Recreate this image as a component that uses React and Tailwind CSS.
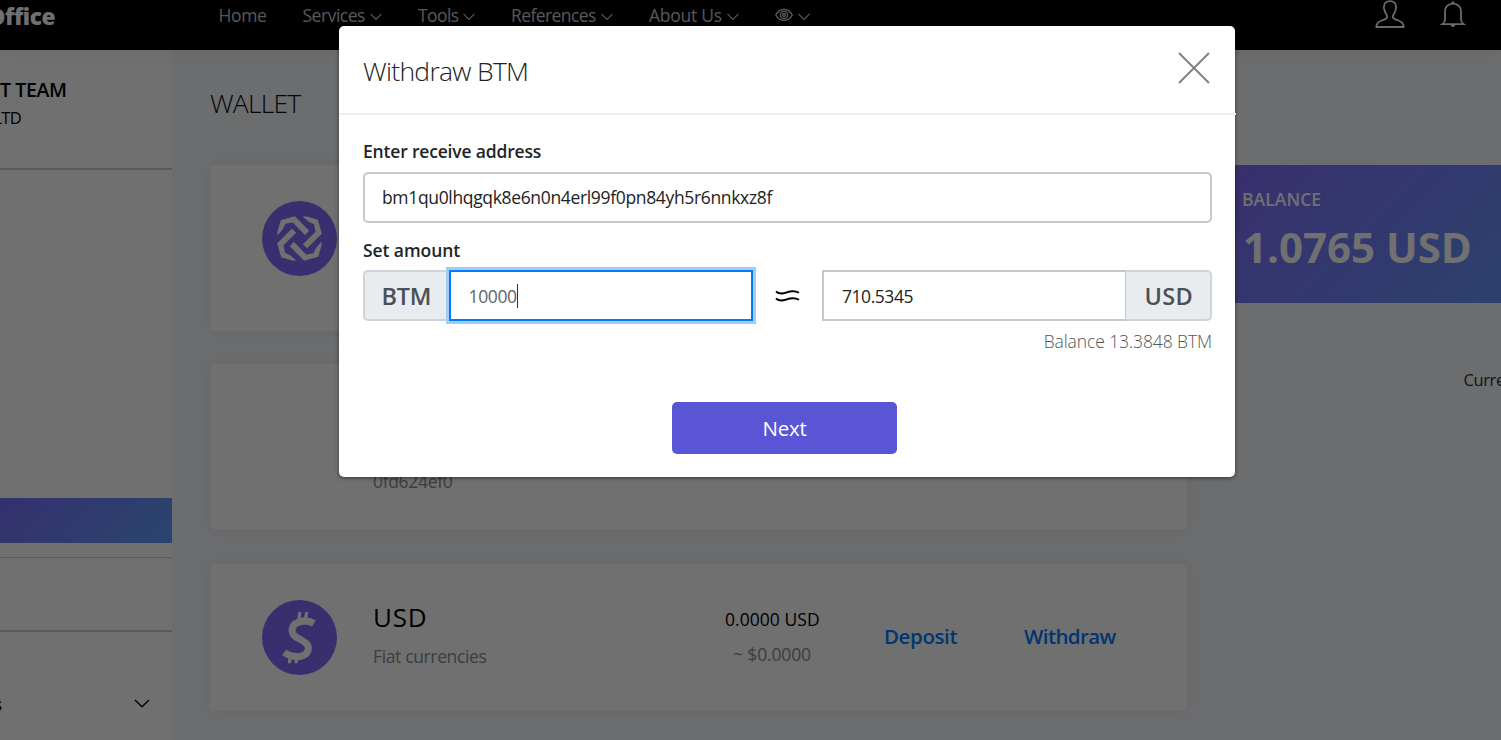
function Chevron({ className }) {
  return (
    <svg className={className} width="12" height="8" viewBox="0 0 12 8" fill="none" stroke="currentColor" strokeWidth="1.2">
      <path d="M.5 .8 6 6.400 11.500 .8" />
    </svg>
  );
}

function Eye() {
  return (
    <svg width="18" height="14" viewBox="0 0 19 14" fill="none" stroke="currentColor" strokeWidth="1.5">
      <path d="M.8 7C3 3.200 6 1.200 9.500 1.200S16 3.200 18.200 7C16 10.800 13 12.800 9.500 12.800S3 10.800 .8 7Z" />
      <circle cx="9.500" cy="7" r="3.800" />
      <circle cx="9.500" cy="7" r="1.500" />
    </svg>
  );
}

function Person() {
  return (
    <svg width="30" height="29" viewBox="0 0 30 29" fill="none" stroke="currentColor" strokeWidth="1.800">
      <path d="M12.200 16.800C12.200 14.600 9.600 12.800 9.300 9.200 8.800 8.600 8.700 7 9.200 6.400 9 3.200 10.900 1.200 15 1.200S21 3.200 20.800 6.400C21.300 7 21.200 8.600 20.700 9.200 20.400 12.800 17.800 14.600 17.800 16.800 17.800 19.400 20.500 19.400 23.500 20.500 26.800 21.700 28.600 23.800 28.600 27H1.400C1.400 23.800 3.200 21.700 6.500 20.500 9.500 19.400 12.200 19.400 12.200 16.800Z" />
    </svg>
  );
}

function Bell() {
  return (
    <svg className="mt-px" width="26" height="27" viewBox="0 0 26 27" fill="none" stroke="currentColor" strokeWidth="1.800">
      <path d="M13 2.600C8 2.600 5 6.200 5 10.500V18.500C5 20.300 4.300 21.800 2.300 23.200H23.700C21.700 21.800 21 20.300 21 18.500V10.500C21 6.200 18 2.600 13 2.600Z" />
      <path d="M13 .4V2.600" strokeWidth="2.500" />
      <path d="M10.600 23.800C10.800 25.400 11.800 26 13 26S15.200 25.400 15.400 23.800Z" fill="currentColor" stroke="none" />
    </svg>
  );
}

function BtmLogo() {
  const arm = "M-66-9V-22L-56-55-14-67 29-23 17-10-20-48-42-44-50-28Z";
  return (
    <svg width="75" height="75" viewBox="-112.500 -112.500 225 225">
      <circle r="112.500" fill="#846bfa" />
      <g fill="#fff">
        <path d={arm} />
        <path d={arm} transform="rotate(90)" />
        <path d={arm} transform="rotate(180)" />
        <path d={arm} transform="rotate(270)" />
      </g>
    </svg>
  );
}

function DollarLogo() {
  return (
    <svg width="75" height="75" viewBox="-112.500 -112.500 225 225" fill="none" stroke="#fff">
      <circle r="112.500" fill="#846bfa" stroke="none" />
      <path d="M43-42C30-50 12-51 0-47-16-42-24-31-22-18-20-4-6 1 8 9 22 17 30 26 26 38 21 53 6 59-12 57-26 56-36 52-46 45" strokeWidth="21" strokeLinejoin="round" />
      <path d="M1-72-3-52M21-72 17-52M-27 55-30 73M-7 55-10 73" strokeWidth="10" strokeLinecap="round" />
    </svg>
  );
}

function NavItem({ children, className, menu = true }) {
  return (
    <div className={`flex h-6 items-center gap-[5px] ${className}`}>
      {children}
      {menu && <Chevron className="mt-[3px]" />}
    </div>
  );
}

function Header() {
  return (
    <header className="relative z-10 flex h-[50px] w-full items-start bg-black text-white shadow-[0_0_16px_rgba(0,0,0,0.08)]">
      <div className="flex w-[218.500px] shrink-0">
        <div className="mt-[3px] flex w-[55px] shrink-0 justify-end text-[22.500px] leading-7 font-extrabold tracking-[-0.4px]">Office</div>
      </div>
      <nav className="mt-[3px] flex text-[17.500px] leading-6 text-[#c1cad1]">
        <NavItem menu={false} className="w-[84px] tracking-[-0.350px]">Home</NavItem>
        <NavItem className="w-[115.500px] tracking-[-0.480px]">Services</NavItem>
        <NavItem className="w-[93px] tracking-[-0.600px]">Tools</NavItem>
        <NavItem className="w-[138px] tracking-[-0.580px]">References</NavItem>
        <NavItem className="w-[125.500px] tracking-[-0.250px]">About Us</NavItem>
        <NavItem><Eye /></NavItem>
      </nav>
      <div className="ml-auto flex gap-[35px] pr-[35px] text-[#f4f4f4]">
        <Person />
        <Bell />
      </div>
    </header>
  );
}

function Sidebar() {
  return (
    <aside className="flex w-[172px] shrink-0 flex-col overflow-hidden bg-white">
      <div className="flex h-[118px] flex-col pt-[26px]">
        <div className="flex w-[66.500px] justify-end text-[19.500px] leading-7 font-semibold tracking-[-0.400px] whitespace-nowrap text-black">T TEAM</div>
        <div className="flex w-[21px] justify-end text-[16.500px] leading-7 tracking-[-0.700px] text-black">LTD</div>
      </div>
      <div className="h-0.5 bg-[#cfcfcf]" />
      <div className="mt-[328px] h-[45px] bg-linear-[135deg] from-[#7a6efb] to-[#5f9dfc]" />
      <div className="mt-[14px] h-px bg-[#cfcfcf]" />
      <div className="mt-[72px] h-0.5 bg-[#cfcfcf]" />
      <div className="flex grow items-center justify-between pt-[35px] pr-[22px] text-black">
        <div className="flex w-[2px] justify-end text-[18px] leading-6 font-semibold">s</div>
        <svg className="-mt-px" width="16" height="9" viewBox="0 0 16 9" fill="none" stroke="currentColor" strokeWidth="1.200">
          <path d="M1 1 8 7.800 15 1" />
        </svg>
      </div>
    </aside>
  );
}

function Card({ children, className }) {
  return (
    <section className={`flex w-full shrink-0 items-start rounded-[5px] bg-white px-[52px] pt-9 shadow-[0_0_16px_rgba(60,50,90,0.080)] ${className}`}>
      {children}
    </section>
  );
}

function Page() {
  return (
    <div className="flex min-h-0 flex-1">
      <Sidebar />
      <main className="flex min-w-0 flex-1 flex-col overflow-hidden bg-[#f5f7fb] pl-[38px]">
        <h1 className="mt-[35px] h-9 text-[26.500px] leading-9 font-light tracking-[-0.800px] text-[#111]">WALLET</h1>
        <div className="mt-11 flex">
          <div className="flex w-[977px] shrink-0 flex-col">
            <Card className="h-[166px]">
              <BtmLogo />
            </Card>
            <Card className="mt-[33px] h-[166px]">
              <div className="mt-[69px] pl-[111px] text-[17.500px] leading-6 tracking-[-0.330px] text-[#888c90]">0fd624ef0</div>
            </Card>
            <Card className="mt-[34px] h-[147px]">
              <DollarLogo />
              <div className="w-[388px] shrink-0 pl-9">
                <div className="-mt-px text-[26px] leading-9 font-medium tracking-[0.800px] text-black">USD</div>
                <div className="mt-[9px] text-[17.500px] leading-6 tracking-[-0.360px] text-[#888c90]">Fiat currencies</div>
              </div>
              <div className="w-[94px] shrink-0 text-center whitespace-nowrap">
                <div className="mt-[7px] text-[17.500px] leading-6 font-medium tracking-[0.050px] text-black">0.0000 USD</div>
                <div className="mt-[11px] text-[17.500px] leading-6 tracking-[-0.150px] text-[#888c90]">~ $0.0000</div>
              </div>
              <div className="flex shrink-0 pl-[65px] pt-[22px] text-[20.500px] leading-7 font-semibold text-[#007bff]">
                <span className="w-[140px] tracking-[-0.400px]">Deposit</span>
                <span className="tracking-[-0.600px]">Withdraw</span>
              </div>
            </Card>
          </div>
          <div className="ml-[32px] flex min-w-0 flex-1 flex-col">
            <div className="h-[138px] bg-linear-[135deg] from-[#846bfa] to-[#6494fb] pt-[22px] pl-[23px] text-white">
              <div className="text-[17.500px] leading-6 font-semibold tracking-[0.050px]">BALANCE</div>
              <div className="mt-[8px] pl-px text-[42px] leading-[56px] font-bold whitespace-nowrap">1.0765 USD</div>
            </div>
            <div className="mt-[65px] flex pl-[244.500px] text-[16.500px] leading-6 tracking-[-0.400px] text-[#333]">Curre</div>
          </div>
        </div>
      </main>
    </div>
  );
}

function Unit({ children, className }) {
  return (
    <div className={`flex h-full w-[86px] items-center border-2 border-[#ced4da] bg-[#e9ecef] pt-[3px] text-[23.500px] font-semibold text-[#495057] ${className}`}>
      {children}
    </div>
  );
}

function WithdrawDialog() {
  return (
    <div className="mt-[26px] ml-[339px] flex h-[451px] w-[896px] flex-col rounded-[5px] bg-white text-[#212529] shadow-[0_1px_4px_rgba(0,0,0,0.500)]">
      <div className="-mr-px flex h-[89px] items-start justify-between border-b-2 border-[#e9eef2] pr-[26.500px] pl-6">
        <h2 className="mt-[27px] text-[26.500px] leading-9 font-light tracking-[-0.700px] text-[#222]">Withdraw BTM</h2>
        <svg className="mt-[26px]" width="32" height="32" viewBox="0 0 32 32" fill="none" stroke="#808080" strokeWidth="1.900">
          <path d="M1 1 31 31M31 1 1 31" />
        </svg>
      </div>
      <div className="flex flex-col pt-6 pr-[23px] pl-6">
        <div className="text-[17.500px] leading-6 font-semibold tracking-[-0.180px]">Enter receive address</div>
        <div className="mt-[9px] flex h-[51px] items-center rounded-[5px] border-2 border-[#c6c7cf] pl-[17px] text-[17.500px] tracking-[-0.340px] text-[#222]">
          bm1qu0lhqgqk8e6n0n4erl99f0pn84yh5r6nnkxz8f
        </div>
        <div className="mt-[15px] text-[17.500px] leading-6 font-semibold tracking-[-0.080px]">Set amount</div>
        <div className="mt-2 flex h-[51px] items-center">
          <Unit className="rounded-l-[5px] border-r-0 pl-[16.500px] tracking-[-0.200px]">BTM</Unit>
          <div className="flex h-full w-[304px] items-center border-2 border-[#007bff] pt-px pl-[17.500px] text-[17.500px] tracking-[-0.350px] text-[#5c6369] shadow-[0_0_0_3px_#a0cdf1]">
            10000
            <span className="-mt-px h-6 w-px bg-[#333]" />
          </div>
          <svg className="mx-[22px] mt-px shrink-0" width="25" height="14" viewBox="0 0 25 14" fill="none" stroke="#000" strokeWidth="1.900">
            <path d="M1 2.500C3 4.300 7 5 11 3.600 15 2.200 20 1.300 24 3.800M1 9.500C3 11.300 7 12 11 10.600 15 9.200 20 8.300 24 10.800" />
          </svg>
          <div className="flex h-full w-[305px] shrink-0 items-center border-2 border-[#c6c7cb] pt-px pl-[18px] text-[17.500px] tracking-[-0.450px] text-[#222]">
            710.5345
          </div>
          <Unit className="-ml-px shrink-0 rounded-r-[5px] border-l-0 pl-[18.500px] tracking-[0.300px]">USD</Unit>
        </div>
        <div className="mt-2 text-right text-[17.500px] leading-6 font-light tracking-[-0.100px] text-[#555]">Balance 13.3848 BTM</div>
        <button className="mt-[49px] ml-[309px] h-[52px] w-[225px] rounded-[5px] bg-[#5955d5] text-[20.500px] font-medium tracking-[-0.200px] text-white">Next</button>
      </div>
    </div>
  );
}

export default function App() {
  return (
    <div className="relative flex h-[740px] w-[1501px] flex-col overflow-hidden font-['Open_Sans','Noto_Sans',sans-serif]">
      <Header />
      <Page />
      <div className="absolute inset-0 z-20 bg-black/56">
        <WithdrawDialog />
      </div>
    </div>
  );
}
